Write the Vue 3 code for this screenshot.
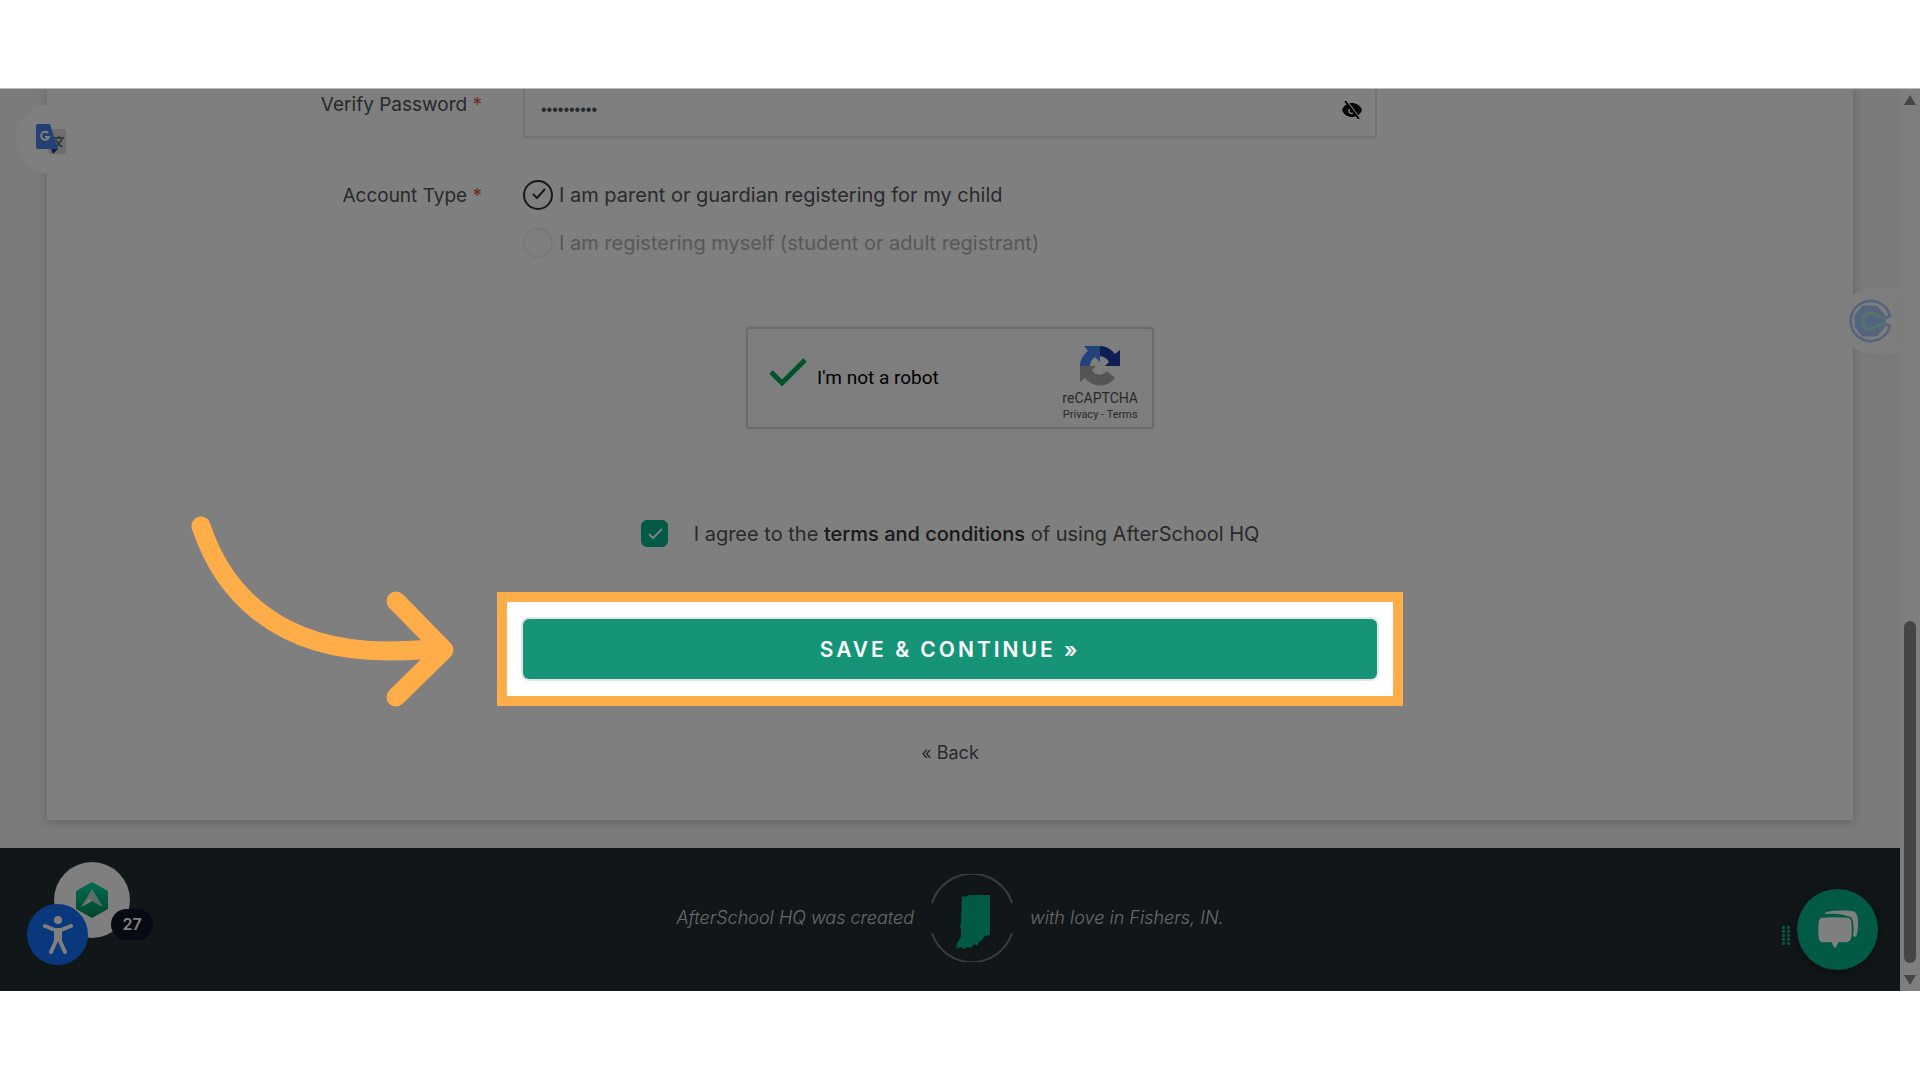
<script setup>
import { ref } from "vue";

const password = ref("afterschoo");
const showPassword = ref(false);
const accountType = ref("parent");
const agreed = ref(true);
const notifications = ref(27);

const accountTypes = [
  { value: "parent", label: "I am parent or guardian registering for my child" },
  { value: "self", label: "I am registering myself (student or adult registrant)" },
];
</script>

<template>
  <div class="page">
    <div class="screen">
      <div class="viewport">
        <main class="content">
          <form class="card" @submit.prevent>
            <!-- Verify password -->
            <label for="verify-password" class="form-label">Verify Password <span class="required">*</span></label>
            <div class="password-field">
              <input
                id="verify-password"
                v-model="password"
                class="password-input"
                :type="showPassword ? 'text' : 'password'"
                autocomplete="off"
              />
              <button
                type="button"
                class="eye-button"
                aria-label="Toggle password"
                @click="showPassword = !showPassword"
              >
                <svg width="20" height="18" viewBox="0 0 20 18">
                  <path d="M0 9C2 4 6 2 10 2s8 2 10 7c-2 5-6 7-10 7S2 14 0 9z" fill="#000" />
                  <path d="M7 8v2c0 2 2 3 4 2" fill="none" stroke="#fff" stroke-width="1.5" />
                  <path d="M5 0l13 17" stroke="#fff" stroke-width="1.2" />
                  <path d="M3 0l14 18" stroke="#000" stroke-width="1.8" />
                </svg>
              </button>
            </div>

            <!-- Account type -->
            <span id="account-type" class="form-label account-label">Account Type <span class="required">*</span></span>
            <div class="account-types" role="radiogroup" aria-labelledby="account-type">
              <label
                v-for="type in accountTypes"
                :key="type.value"
                class="radio-row"
                :class="{ selected: accountType === type.value }"
              >
                <input v-model="accountType" type="radio" name="account" class="radio" :value="type.value" />
                <span>{{ type.label }}</span>
                <svg v-if="accountType === type.value" class="radio-check" width="30" height="30" viewBox="0 0 30 30">
                  <path d="M10 14l4 4 8-9" />
                </svg>
              </label>
            </div>

            <!-- reCAPTCHA -->
            <div class="captcha">
              <svg class="captcha-check" width="38" height="30" viewBox="0 0 38 30">
                <path d="M2 14l11 11L36 2" fill="none" stroke="#00a65a" stroke-width="5" />
              </svg>
              <span class="captcha-text">I'm not a robot</span>
              <div class="captcha-brand">
                <svg width="40" height="40" viewBox="0 0 40 40">
                  <path d="M20 0c6 0 11 3 15 8l5-4v16H25l4-4c-2-4-5-5-9-6z" fill="#1c3aa9" />
                  <path d="M20 0v16l-5-5c-3 2-5 5-5 9H0C0 14 3 9 8 5L4 0z" fill="#4285f4" />
                  <path d="M0 20h16l-4 4c3 5 9 7 15 1l8 7c-8 10-22 10-30 0l-5 4z" fill="#ababab" />
                </svg>
                <span class="captcha-name">reCAPTCHA</span>
                <span class="captcha-links"><a href="#">Privacy</a> - <a href="#">Terms</a></span>
              </div>
            </div>

            <!-- Terms -->
            <div class="terms">
              <span class="checkbox-wrap">
                <input id="agree" v-model="agreed" type="checkbox" class="checkbox" />
                <svg v-if="agreed" class="checkbox-check" width="27" height="27" viewBox="0 0 27 27">
                  <path d="M8 14l4 4 9-9" />
                </svg>
              </span>
              <label for="agree">I agree to the <a href="#">terms and conditions</a> of using AfterSchool HQ</label>
            </div>

            <div class="spotlight">
              <button type="submit" class="save-button">SAVE &amp; CONTINUE »</button>
            </div>

            <a href="#" class="back">« Back</a>
          </form>
        </main>

        <footer class="footer">
          <span>AfterSchool HQ was created</span>
          <svg width="86" height="88" viewBox="0 0 86 88">
            <g fill="none" stroke="#74787a" stroke-width="2">
              <path d="M3 29a42 42 0 0 1 80 0" />
              <path d="M3 59a42 42 0 0 0 80 0" />
            </g>
            <path d="M33 22q4 2 7-1h21v40l-5 1-3 4-3 2-2 4-3-2-3 4-4-1-3 2-3-2-4 1-1 1 1-6 4-6v-8l-1-3 1-3z" fill="#00b48a" />
          </svg>
          <span>with love in Fishers, IN.</span>
        </footer>

        <!-- Floating widgets -->
        <button type="button" class="translate" aria-label="Translate">
          <svg width="30" height="30" viewBox="0 0 30 30">
            <rect x="12" y="5" width="18" height="25" rx="2" fill="#dcdcdc" />
            <path d="M18 14h10M23 12v2M26 14c-1 4-3 6-6 9M20 16c1 3 4 5 6 7" fill="none" stroke="#607d7d" stroke-width="2" />
            <path d="M15 25h7l-5 5z" fill="#283593" />
            <path d="M2 0h12l8 25H2q-2 0-2-2V2q0-2 2-2z" fill="#4a80e8" />
            <path d="M12 9a4 4 0 1 0 1 4H9" fill="none" stroke="#fff" stroke-width="2" />
          </svg>
        </button>

        <button type="button" class="scheduler" aria-label="Schedule">
          <svg width="44" height="44" viewBox="0 0 44 44">
            <path d="M15 8h13l8 9v10l-8 9H15l-7-9V17z" fill="#a8c8f8" stroke="#a8c8f8" stroke-width="3" stroke-linejoin="round" />
            <path d="M38 19h-3c-5 0-6-5-13-5-5 0-7 3-7 8s2 8 7 8c7 0 8-5 13-5h3" fill="none" stroke="#a8e8dc" stroke-width="3" />
            <path d="M37 19l5-2A20 20 0 1 0 42 27l-5-2" fill="none" stroke="#a8c8f8" stroke-width="2.5" stroke-linejoin="round" />
          </svg>
        </button>

        <button type="button" class="launcher" aria-label="Notifications">
          <svg width="34" height="38" viewBox="0 0 34 38">
            <defs>
              <linearGradient id="hexagon" x1="0" y1="0" x2="0" y2="1">
                <stop offset="0" stop-color="#00d8a8" />
                <stop offset="1" stop-color="#008a54" />
              </linearGradient>
            </defs>
            <path d="M17 1l16 9v18l-16 9L1 28V10z" fill="url(#hexagon)" />
            <path d="M17 8l11 18-11-6-11 6z" fill="#b8d8c8" />
            <path d="M17 20l-11 6 9-9z" fill="#e8f4ee" />
          </svg>
          <span class="badge">{{ notifications }}</span>
        </button>

        <button type="button" class="accessibility" aria-label="Accessibility">
          <svg width="30" height="40" viewBox="0 0 30 40">
            <circle cx="15" cy="5" r="4" fill="#fff" />
            <path d="M2 11l10 4h6l10-4M15 16v8M13 16v10L8 37M17 16v10l5 11" fill="none" stroke="#fff" stroke-width="4" stroke-linecap="round" stroke-linejoin="round" />
          </svg>
        </button>

        <span class="drag-handle"><i v-for="n in 10" :key="n"></i></span>

        <button type="button" class="chat" aria-label="Chat">
          <svg width="42" height="40" viewBox="0 0 42 40">
            <path d="M8 3c5-3 25-3 30-1 4 3 4 18 1 25l-3-1c1-7 1-14-2-18-4-4-18-5-26-4z" fill="#fff" />
            <path d="M5 7q13-1 26 0 4 1 4 5 1 9 0 16-1 4-5 5h-8l-4 7-4-7H5q-4-1-4-5-1-8 0-16 0-4 4-5z" fill="#fff" stroke="#00b48a" stroke-width="1.5" />
          </svg>
        </button>
      </div>

      <div class="scrollbar">
        <svg width="12" height="10" viewBox="0 0 12 10"><path d="M6 0l6 10H0z" /></svg>
        <span class="thumb"></span>
        <svg width="12" height="10" viewBox="0 0 12 10"><path d="M6 10l6-10H0z" /></svg>
      </div>

      <!-- Arrow that points at the save button -->
      <svg class="pointer" width="264" height="192" viewBox="0 0 264 192">
        <path d="M11 11C32 75 85 136 198 136q18 0 38-1.500M206 86l48 49-48 47" />
      </svg>
    </div>
  </div>
</template>

<style>
body {
  margin: 0;
  background: #fff;
}
</style>

<style scoped>
.page {
  min-height: 100vh;
  box-sizing: border-box;
  padding: 88px 0;
  font-family: Inter, "Liberation Sans", sans-serif;
  font-size: 19px;
  line-height: 24px;
  color: #505458;
}

.page * {
  box-sizing: border-box;
}

a {
  color: inherit;
  text-decoration: none;
}

button {
  padding: 0;
  border: 0;
  font-family: inherit;
  cursor: pointer;
}

.screen {
  position: relative;
  display: flex;
  overflow: hidden;
  border-top: 1px solid #b8b8b8;
}

.viewport {
  position: relative;
  flex: 1;
  min-width: 0;
}

.content {
  padding: 0 47px 28px;
  background: #f6f6f6;
}

.card {
  display: grid;
  grid-template-columns: 1fr minmax(0, 854px) 1fr;
  padding-bottom: 55px;
  background: #fff;
  box-shadow: 0 2px 10px rgba(0, 0, 0, 0.2);
}

.form-label {
  grid-column: 1;
  padding: 4px 41px 0 0;
  text-align: right;
}

.required {
  color: #e05050;
}

.password-field {
  grid-column: 2;
  display: flex;
  align-items: center;
  height: 49px;
  padding: 0 13px 6px 16px;
  border: 2px solid #e6e6e6;
  border-top: 0;
}

.password-input {
  flex: 1;
  min-width: 0;
  padding: 0;
  border: 0;
  outline: 0;
  background: transparent;
  font-family: "Liberation Sans", sans-serif;
  font-size: 16px;
  color: #505458;
}

.eye-button {
  display: flex;
  background: none;
}

.account-label {
  padding-top: 46px;
}

.account-types {
  grid-column: 2;
  display: grid;
  gap: 18px;
  padding-top: 42px;
  font-size: 20px;
}

.radio-row {
  position: relative;
  display: flex;
  align-items: center;
  gap: 6px;
  height: 30px;
  color: #b0b0b0;
}

.radio-row.selected {
  color: #505458;
}

.radio {
  appearance: none;
  width: 30px;
  height: 30px;
  margin: 0;
  border: 2px solid #f0f0f0;
  border-radius: 50%;
}

.selected .radio {
  border-color: #303234;
}

.radio-check,
.checkbox-check {
  position: absolute;
  top: 0;
  left: 0;
  fill: none;
  stroke: #303234;
  stroke-width: 2;
  pointer-events: none;
}

.captcha {
  grid-column: 2;
  justify-self: center;
  display: flex;
  align-items: center;
  gap: 10px;
  width: 408px;
  height: 102px;
  margin-top: 69px;
  padding: 0 14px 0 21px;
  border: 2px solid #d6d6d6;
  border-radius: 4px;
  background: #fcfcfc;
  font-family: Roboto, sans-serif;
  box-shadow: 0 0 4px rgba(0, 0, 0, 0.1);
}

.captcha-check {
  margin-bottom: 10px;
}

.captcha-text {
  flex: 1;
  font-size: 19px;
  color: #000;
}

.captcha-brand {
  display: flex;
  flex-direction: column;
  align-items: center;
  padding-top: 12px;
  color: #555;
}

.captcha-name {
  margin-top: 3px;
  font-size: 14px;
  line-height: 18px;
}

.captcha-links {
  font-size: 11px;
  line-height: 16px;
}

.terms {
  grid-column: 2;
  justify-self: center;
  display: flex;
  align-items: center;
  gap: 26px;
  margin-top: 91px;
  font-size: 20px;
}

.terms a {
  font-weight: 500;
  color: #303234;
}

.checkbox-wrap {
  position: relative;
  display: flex;
}

.checkbox {
  appearance: none;
  width: 27px;
  height: 27px;
  margin: 0;
  border: 1px solid #00b48a;
  border-radius: 6px;
}

.checkbox:checked {
  background: #00b48a;
}

.checkbox-check {
  stroke: #fff;
}

/* Everything outside the spotlight is dimmed by its shadow */
.spotlight {
  grid-column: 2;
  z-index: 10;
  margin: 45px -26px 0;
  padding: 17px 16px;
  border: 10px solid #ffad48;
  background: #fff;
  box-shadow: 0 0 0 3000px rgba(0, 0, 0, 0.5);
}

.save-button {
  display: block;
  width: 100%;
  height: 60px;
  border-radius: 6px;
  background: #159477;
  color: #fff;
  font-size: 21px;
  font-weight: 600;
  letter-spacing: 3px;
  box-shadow: 0 0 0 2px #e4e4e4;
}

.back {
  grid-column: 2;
  justify-self: center;
  margin-top: 35px;
  font-size: 18px;
}

.footer {
  display: flex;
  align-items: center;
  justify-content: center;
  gap: 15px;
  height: 143px;
  padding-bottom: 3px;
  background: #222c30;
  font-size: 18px;
  font-style: italic;
  font-weight: 300;
  color: #d0d2d3;
}

.translate,
.scheduler,
.launcher,
.accessibility,
.chat,
.drag-handle {
  position: absolute;
  display: flex;
  align-items: center;
  justify-content: center;
  border-radius: 50%;
}

.translate {
  top: 15px;
  left: 16px;
  width: 70px;
  height: 70px;
  background: #fff;
}

.scheduler {
  top: 199px;
  right: 0;
  width: 60px;
  height: 66px;
  border-radius: 33px 0 0 33px;
  background: #fdfdfd;
  box-shadow: 0 0 10px rgba(0, 0, 0, 0.04);
}

.launcher {
  bottom: 53px;
  left: 54px;
  width: 76px;
  height: 76px;
  background: #fff;
}

.badge {
  position: absolute;
  right: -23px;
  bottom: -2px;
  width: 42px;
  border-radius: 16px;
  background: #0e1424;
  color: #fff;
  font-size: 16px;
  font-weight: 600;
  line-height: 31px;
}

.accessibility {
  bottom: 26px;
  left: 27px;
  width: 61px;
  height: 61px;
  background: #1470f8;
}

.chat {
  right: 22px;
  bottom: 21px;
  width: 81px;
  height: 81px;
  background: #00b48a;
  box-shadow: 0 2px 12px rgba(0, 0, 0, 0.4);
}

.drag-handle {
  right: 110px;
  bottom: 46px;
  display: grid;
  grid-template-columns: 3px 3px;
  gap: 1px 2px;
  border-radius: 0;
}

.drag-handle i {
  height: 3px;
  border-radius: 1px;
  background: #00b48a;
}

.scrollbar {
  display: flex;
  flex-direction: column;
  align-items: center;
  justify-content: space-between;
  width: 20px;
  padding: 6px 0;
  background: #fcfcfc;
}

.scrollbar svg {
  fill: #8a8a8a;
}

.thumb {
  width: 12px;
  height: 342px;
  margin: auto 0 12px;
  border-radius: 6px;
  background: #8a8a8a;
}

.pointer {
  position: absolute;
  z-index: 11;
  top: 426px;
  left: 190px;
  fill: none;
  stroke: #ffad48;
  stroke-width: 19;
  stroke-linecap: round;
  stroke-linejoin: round;
}
</style>
